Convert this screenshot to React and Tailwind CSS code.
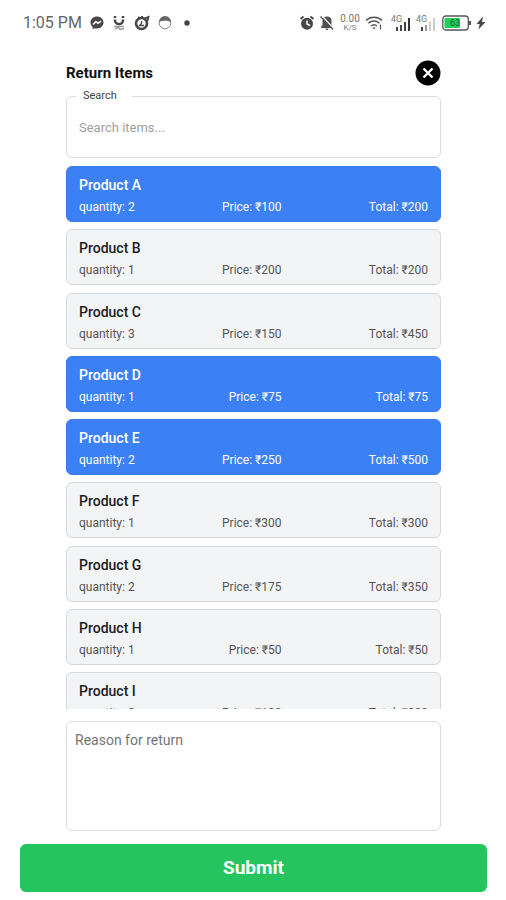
import React, { useState } from 'react'

const initialItems = [
    { name: 'Product A', quantity: 2, price: 100, selected: true },
    { name: 'Product B', quantity: 1, price: 200, selected: false },
    { name: 'Product C', quantity: 3, price: 150, selected: false },
    { name: 'Product D', quantity: 1, price: 75, selected: true },
    { name: 'Product E', quantity: 2, price: 250, selected: true },
    { name: 'Product F', quantity: 1, price: 300, selected: false },
    { name: 'Product G', quantity: 2, price: 175, selected: false },
    { name: 'Product H', quantity: 1, price: 50, selected: false },
    { name: 'Product I', quantity: 2, price: 100, selected: false },
]

const Signal = ({ weak }) => (
    <svg width="22" height="18" viewBox="0 0 22 18">
        <text x="0" y="8" fontSize="9" fontFamily="Roboto, sans-serif" fill="#777">4G</text>
        <g fill="#444">
            <rect x="5" y="13" width="2" height="4" />
            <rect x="9" y="11" width="2" height="6" fill={weak ? '#999' : '#444'} />
            <rect x="13" y="8" width="2" height="9" fill={weak ? '#ccc' : '#444'} />
            <rect x="17" y="4" width="2" height="13" fill={weak ? '#ccc' : '#333'} />
        </g>
    </svg>
)

const StatusBar = () => (
    <div className="flex h-[46px] items-center justify-between pl-[23px] pr-5 text-[#666]">
        <div className="flex items-center gap-2">
            <span className="text-[16px] leading-5">1:05 PM</span>
            <svg width="14" height="14" viewBox="0 0 14 14">
                <path d="M7 0.5C3.2 0.5 0.5 3.2 0.5 6.6c0 1.9.8 3.4 2.1 4.5v2.2l2.1-1.1c.7.2 1.5.3 2.3.3 3.8 0 6.5-2.6 6.5-5.9S10.8.5 7 .5z" fill="#484848" />
                <path d="M3 8.5 6 5.5 8 7.3 11 5.2" fill="none" stroke="#fff" strokeWidth="1.6" />
            </svg>
            <svg width="14" height="16" viewBox="0 0 14 16">
                <path d="M3 1v2M11 1v2" stroke="#444" strokeWidth="2.4" />
                <path d="M3 4.5v1a4 3.5 0 0 0 8 0v-1" fill="none" stroke="#444" strokeWidth="2.4" />
                <path d="M2 11.5h10M3 14.5l3-2.5 2 2.5 4-1" fill="none" stroke="#999" strokeWidth="1.3" />
            </svg>
            <svg width="16" height="16" viewBox="0 0 16 16" fill="none" stroke="#484848">
                <circle cx="7.5" cy="8.5" r="5.5" strokeWidth="2.6" />
                <path d="M9 4l5.5-2-1 4M4 2l2 1M8 1v2" strokeWidth="1.8" />
                <path d="M7.5 6v2.5l-2 2h4.500" strokeWidth="1.3" />
            </svg>
            <svg width="14" height="14" viewBox="0 0 14 14">
                <circle cx="7" cy="7" r="5.8" fill="none" stroke="#888" strokeWidth="1" />
                <path d="M1 6a6 6 0 0 1 12 0C10 4.3 4 4.3 1 6z" fill="#666" />
            </svg>
            <svg width="14" height="14" viewBox="0 0 14 14">
                <circle cx="7" cy="7" r="2.7" fill="#444" />
            </svg>
        </div>
        <div className="flex items-center gap-1">
            <svg width="16" height="16" viewBox="0 0 16 16">
                <circle cx="8" cy="8.8" r="6" fill="#484848" />
                <path d="M1.5 4l3-2.500M14.5 4l-3-2.500" stroke="#484848" strokeWidth="1.8" />
                <path d="M8 5.500v3.500l3 1.500" fill="none" stroke="#fff" strokeWidth="1.5" />
            </svg>
            <svg width="16" height="16" viewBox="0 0 16 16">
                <path d="M8 1.5c-3 0-4.500 2-4.500 4.500v4L2 12v1h12v-1l-1.500-2V6C12.500 3.500 11 1.500 8 1.500zM6.500 13.500h3a1.500 1.500 0 0 1-3 0z" fill="#505050" />
                <path d="M3 1l12 13" stroke="#fff" strokeWidth="1.5" />
                <path d="M1.5 1.5l12.5 13" stroke="#505050" strokeWidth="1.3" />
            </svg>
            <div className="flex w-[22px] flex-col items-center text-[10px] leading-[9px] text-[#777]">
                <span>0.00</span>
                <span className="text-[8px]">K/S</span>
            </div>
            <svg width="18" height="16" viewBox="0 0 18 16" fill="none" stroke="#555" strokeWidth="1.5">
                <path d="M1 5.5a11.5 11.5 0 0 1 16 0M3.5 8.3a8 8 0 0 1 11 0M6 11a4.5 4.5 0 0 1 6 0" />
                <path d="M7.3 12.5h3.4L9 14.5z" fill="#555" stroke="none" />
                <path d="M15.5 9.5v5" strokeWidth="1.2" />
            </svg>
            <div className="ml-1 flex items-center gap-[3px]">
                <Signal />
                <Signal weak />
            </div>
            <svg width="30" height="16" viewBox="0 0 30 16">
                <rect x="0.8" y="1" width="25.5" height="14" rx="3" fill="#fff" stroke="#555" strokeWidth="1.3" />
                <rect x="2.5" y="3" width="15.5" height="10" rx="1" fill="#1fce5b" />
                <path d="M28 6v4" stroke="#555" strokeWidth="2" />
                <text x="8" y="11" fontSize="9" fontFamily="Roboto, sans-serif" fill="#17632f">63</text>
            </svg>
            <svg width="10" height="14" viewBox="0 0 10 14">
                <path d="M7 .5.5 8h3.200L2.500 13.500 9.500 6H6z" fill="#484848" />
            </svg>
        </div>
    </div>
)

const ItemCard = ({ item, onToggle }) => (
    <li>
        <button
            type="button"
            aria-pressed={item.selected}
            onClick={onToggle}
            className={`flex h-14 w-full flex-col gap-[6px] rounded-md border px-3 pt-[10px] text-left ${item.selected ? 'border-[#3b7cf0] bg-[#3b80f5] text-white' : 'border-[#d5d8dc] bg-[#f3f4f6] text-[#555]'}`}
        >
            <span className={`text-[14px] leading-4 font-medium ${item.selected ? '' : 'text-[#1c1c1c]'}`}>{item.name}</span>
            <span className="flex w-full justify-between text-[12px] leading-4">
                <span>quantity: {item.quantity}</span>
                <span>Price: ₹{item.price}</span>
                <span>Total: ₹{item.price * item.quantity}</span>
            </span>
        </button>
    </li>
)

const App = () => {
    const [items, setItems] = useState(initialItems)
    const [search, setSearch] = useState('')
    const [reason, setReason] = useState('')

    const toggle = (name) => {
        setItems(items.map((i) => (i.name === name ? { ...i, selected: !i.selected } : i)))
    }

    const visible = items.filter((i) => i.name.toLowerCase().includes(search.toLowerCase()))

    return (
        <div className="min-h-screen bg-white font-[Roboto,'Noto_Sans',sans-serif]">
            <StatusBar />
            <form onSubmit={(e) => e.preventDefault()} className="pb-[7px] pl-5 pr-[19px]">
                <div className="px-[46px]">
                    <div className="flex items-center justify-between pt-[14px]">
                        <h1 className="text-[15px] leading-[26px] font-bold text-[#111]">Return Items</h1>
                        <button type="button" aria-label="Close">
                            <svg width="26" height="26" viewBox="0 0 26 26">
                                <circle cx="13" cy="13" r="12.5" fill="#000" />
                                <path d="M8.5 8.5l9 9M17.5 8.5l-9 9" stroke="#fff" strokeWidth="2.4" />
                            </svg>
                        </button>
                    </div>
                    <fieldset className="mt-[1px] rounded-md border border-[#dcdcdc] px-3">
                        <legend className="-ml-[3px] px-[7px] text-[11px] leading-[18px] text-[#444]">
                            <label htmlFor="search" className="pr-2">Search</label>
                        </legend>
                        <input
                            id="search"
                            type="text"
                            value={search}
                            onChange={(e) => setSearch(e.target.value)}
                            placeholder="Search items..."
                            className="mb-2 block h-11 w-full text-[13px] outline-none placeholder:text-[#a0a0a0]"
                        />
                    </fieldset>
                    <div className="mt-2 h-[543px] overflow-x-hidden overflow-y-auto [scrollbar-width:none]">
                        <ul className="grid h-[562px] content-between">
                            {visible.map((item) => (
                                <ItemCard key={item.name} item={item} onToggle={() => toggle(item.name)} />
                            ))}
                        </ul>
                    </div>
                    <textarea
                        aria-label="Reason for return"
                        value={reason}
                        onChange={(e) => setReason(e.target.value)}
                        placeholder="Reason for return"
                        className="mt-3 block h-[110px] w-full resize-none rounded-md border border-[#dcdcdc] px-2 py-2 text-[14px] leading-5 outline-none placeholder:text-[#757575]"
                    />
                </div>
                <button type="submit" className="mt-[13px] h-12 w-full rounded-md bg-[#24c55f] text-[19px] font-bold text-white">
                    Submit
                </button>
            </form>
        </div>
    )
}

export default App
